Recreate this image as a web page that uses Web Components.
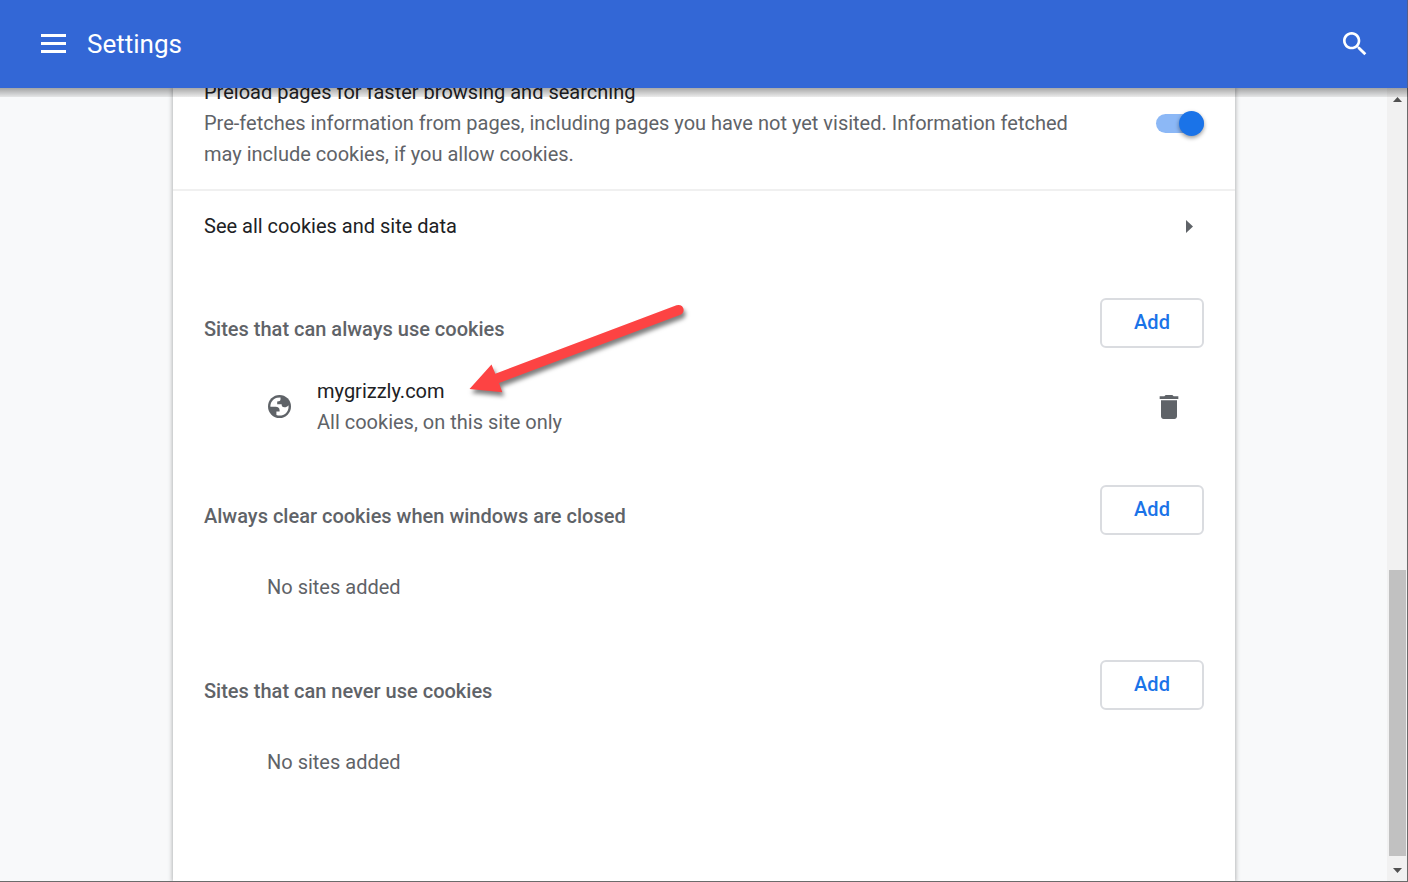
<!DOCTYPE html>
<html lang="en">
<head>
<meta charset="utf-8">
<meta name="viewport" content="width=device-width, initial-scale=1">
<title>Settings</title>
<style>
  html, body { height: 100%; margin: 0; }
  body { background: #f8f9fa; font-family: Roboto, "Liberation Sans", sans-serif; font-size: 20px; line-height: 31px; color: #202124; }
</style>
</head>
<body>
<settings-app></settings-app>
<script>
const define = (name, html, setup) => {
  const template = document.createElement('template');
  template.innerHTML = html;
  customElements.define(name, class extends HTMLElement {
    constructor() {
      super();
      this.attachShadow({ mode: 'open' }).append(template.content.cloneNode(true));
    }
    connectedCallback() { if (setup) setup(this, this.shadowRoot); }
  });
};

define('settings-toolbar', `
  <style>
    :host { display: block; position: relative; z-index: 1; flex: none; background: #3367d6; color: #fff; }
    :host::after { content: ""; position: absolute; inset: 100% 0 auto 0; height: 9px; background: linear-gradient(rgba(0,0,0,.34), rgba(0,0,0,.08)); }
    header { display: flex; align-items: center; height: 88px; padding: 0 36px 0 38px; box-sizing: border-box; border-right: 1px solid #4f5f8c; }
    h1 { flex: 1; margin: 0 0 0 18px; font-size: 26px; font-weight: 400; }
    button { display: block; padding: 0; border: 0; background: none; color: inherit; }
    svg { display: block; fill: currentColor; }
  </style>
  <header>
    <button aria-label="Main menu"><svg width="31" height="32" viewBox="0 0 31 32"><path d="M3 6h25v3H3zM3 14h25v3H3zM3 22h25v3H3z"/></svg></button>
    <h1>Settings</h1>
    <button aria-label="Search settings"><svg width="32" height="32" viewBox="0 0 24 24"><path d="M15.5 14h-.79l-.28-.27C15.41 12.59 16 11.11 16 9.5 16 5.91 13.09 3 9.5 3S3 5.91 3 9.5 5.91 16 9.5 16c1.61 0 3.09-.59 4.23-1.57l.27.28v.79l5 4.99L20.49 19l-4.99-5zm-6 0C7.01 14 5 11.99 5 9.5S7.01 5 9.5 5 14 7.01 14 9.5 11.99 14 9.5 14z"/></svg></button>
  </header>`);

define('settings-toggle', `
  <style>
    :host { display: block; flex: none; }
    input { appearance: none; display: flex; align-items: center; justify-content: flex-end; width: 48px; height: 19px; margin: 0; border-radius: 10px; background: #8cb8f6; }
    input::before { content: ""; width: 25px; height: 25px; border-radius: 50%; background: #1a73e8; box-shadow: 0 2px 4px rgba(0,0,0,.4); }
    input:not(:checked) { justify-content: flex-start; background: #bdc1c6; }
    input:not(:checked)::before { background: #fff; }
  </style>
  <input type="checkbox" checked>`,
  (host, root) => root.querySelector('input').setAttribute('aria-label', host.getAttribute('label')));

define('preload-row', `
  <style>
    :host { display: block; padding: 0 31px 19px; border-bottom: 2px solid #f0f0f0; }
    div { display: flex; align-items: center; justify-content: space-between; }
    p { margin: 0; max-width: 890px; }
    .sub { color: #5f6368; }
  </style>
  <div>
    <section><p><slot name="title"></slot></p><p class="sub"><slot></slot></p></section>
    <settings-toggle label="Preload pages for faster browsing and searching"></settings-toggle>
  </div>`);

define('link-row', `
  <style>
    :host { display: block; }
    a { display: flex; align-items: center; justify-content: space-between; height: 71px; padding: 0 42px 0 31px; color: inherit; text-decoration: none; }
    svg { display: block; fill: #5f6368; }
  </style>
  <a href="#site-data"><slot></slot><svg width="7" height="13" viewBox="0 0 7 13"><path d="M0 0l7 6.500L0 13z"/></svg></a>`);

define('site-list', `
  <style>
    :host { display: block; padding: 36px 31px 0; }
    header { display: flex; justify-content: space-between; height: 50px; }
    h2 { margin: 16px 0 0; font-size: 20px; font-weight: 500; color: #5f6368; }
    button { width: 104px; height: 50px; padding: 0 0 2px; border: 2px solid #dadce0; border-radius: 6px; background: #fff; color: #1a73e8; font: 500 20px/31px Roboto, "Liberation Sans", sans-serif; }
  </style>
  <header><h2></h2><button>Add</button></header>
  <slot></slot>`,
  (host, root) => root.querySelector('h2').textContent = host.getAttribute('heading'));

define('empty-list', `
  <style>:host { display: block; padding: 37px 63px 21px; color: #5f6368; }</style>
  <slot>No sites added</slot>`);

define('site-item', `
  <style>
    :host { display: flex; align-items: center; padding: 28px 19px 11px 64px; }
    .text { flex: 1; margin-left: 26px; }
    p { margin: 0; }
    .sub { color: #5f6368; }
    svg { display: block; fill: #5f6368; }
    button { padding: 0; border: 0; background: none; }
  </style>
  <svg width="23" height="24" viewBox="1 1 23 24"><circle cx="12.500" cy="12.500" r="11.500"/><path fill="#fff" d="M10 3.800C5.800 5 3.300 8.600 3.400 12.800h5.200c2.600 0 4 1.400 4 3.600v1H9.400v3.700c6.300 2 12.200-2.200 12.200-8.400l-.2-1.400c-1 1.500-2.300 2-4 2-2 0-2.800-1.200-2.800-3H10.200V7.500c2.300 0 3.300-.7 3.300-2V3.600z"/></svg>
  <div class="text"><p><slot name="site"></slot></p><p class="sub"><slot></slot></p></div>
  <button aria-label="Remove site"><svg width="32" height="32" viewBox="0 0 24 24"><path d="M6 19c0 1.100.9 2 2 2h8c1.100 0 2-.9 2-2V7H6v12zM19 4h-3.500l-1-1h-5l-1 1H5v2h14V4z"/></svg></button>`);

define('pointer-arrow', `
  <style>
    :host { display: block; position: absolute; left: 290px; top: 220px; pointer-events: none; }
    svg { display: block; overflow: visible; filter: drop-shadow(2px 4px 2px rgba(0,0,0,.5)); }
  </style>
  <svg width="226" height="100" viewBox="463 297 226 100" fill="#fd4343"><path d="M469.500 389L491.500 364.500 495.300 373.700 676.500 305.300A5 5 0 0 1 680.500 314.700L499 383 502.300 392.300z"/></svg>`);

define('page-scrollbar', `
  <style>
    :host { display: flex; flex-direction: column; justify-self: end; width: 21px; padding: 9px 1px 8px 2px; border-right: 1px solid #6b6b6b; box-sizing: border-box; background: #f1f1f1; }
    svg { display: block; flex: none; margin-left: 4px; fill: #505050; }
    .before { flex: 468; }
    .thumb { flex: 286; background: #c1c1c1; }
    .after { flex: 12; }
  </style>
  <svg width="9" height="5" viewBox="0 0 9 5"><path d="M0 5L4.500 0 9 5z"/></svg>
  <div class="before"></div><div class="thumb"></div><div class="after"></div>
  <svg width="9" height="5" viewBox="0 0 9 5"><path d="M0 0h9L4.500 5z"/></svg>`);

define('settings-app', `
  <style>
    :host { display: flex; flex-direction: column; height: 100vh; box-sizing: border-box; border-bottom: 1px solid #6b6b6b; }
    .body { flex: 1; min-height: 0; display: grid; grid-template-columns: 1fr minmax(0, 1062px) 1fr; grid-template-rows: 100%; overflow: hidden; }
    main { grid-column: 2; display: flow-root; background: #fff; box-shadow: 0 0 4px 1px rgba(60,64,67,.35); }
    .content { position: relative; margin-top: -11px; }
  </style>
  <settings-toolbar></settings-toolbar>
  <div class="body">
    <main>
      <div class="content">
        <preload-row><span slot="title">Preload pages for faster browsing and searching</span>Pre-fetches information from pages, including pages you have not yet visited. Information fetched may include cookies, if you allow cookies.</preload-row>
        <link-row>See all cookies and site data</link-row>
        <site-list heading="Sites that can always use cookies">
          <site-item><span slot="site">mygrizzly.com</span>All cookies, on this site only</site-item>
        </site-list>
        <site-list heading="Always clear cookies when windows are closed"><empty-list></empty-list></site-list>
        <site-list heading="Sites that can never use cookies"><empty-list></empty-list></site-list>
        <pointer-arrow></pointer-arrow>
      </div>
    </main>
    <page-scrollbar></page-scrollbar>
  </div>`);
</script>
</body>
</html>
